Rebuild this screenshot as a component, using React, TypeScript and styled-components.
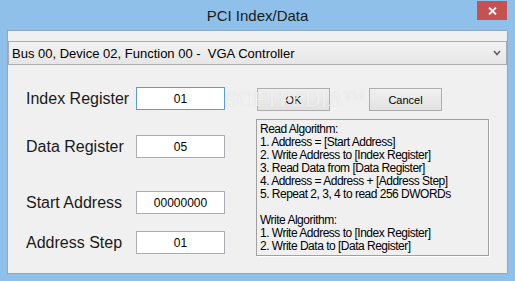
import styled, { createGlobalStyle } from "styled-components";

const GlobalStyle = createGlobalStyle`
  html, body {
    margin: 0;
    padding: 0;
    width: 515px;
    height: 281px;
    overflow: hidden;
  }
`;

const Window = styled.div`
  width: 515px;
  height: 281px;
  display: flex;
  flex-direction: column;
  background: #8fc0ea;
  box-sizing: border-box;
  font-family: "Liberation Sans", Arial, sans-serif;
`;

const TitleBar = styled.div`
  height: 30px;
  display: grid;
  grid-template-columns: 1fr auto 1fr;
  align-items: start;
`;

const Title = styled.div`
  grid-column: 2;
  margin-top: 7px;
  font-size: 15px;
  line-height: 18px;
  color: #1b1b1b;
`;

const CloseButton = styled.div`
  grid-column: 3;
  justify-self: end;
  margin: 1px 8px 0 0;
  width: 30px;
  height: 19px;
  background: #c75050;
  display: flex;
  align-items: center;
  justify-content: center;
`;

const Frame = styled.div`
  flex: 1;
  display: flex;
  padding: 0 7px 7px 7px;
`;

const Client = styled.div`
  position: relative;
  flex: 1;
  background: #f0f0f0;
  border: 1px solid #8ea9c4;
  display: flex;
  flex-direction: column;
`;

const Select = styled.div`
  margin-top: 10px;
  height: 24px;
  box-sizing: border-box;
  border: 1px solid #acacac;
  background: linear-gradient(#f2f2f2, #e6e6e6);
  display: flex;
  align-items: center;
  justify-content: space-between;
  padding: 0 5px 0 3px;
  font-size: 13px;
  color: #000;
  white-space: pre;
`;

const Main = styled.div`
  display: flex;
  gap: 31px;
`;

const LeftColumn = styled.div`
  margin-left: 18px;
  width: 199px;
  padding-top: 22px;
  display: flex;
  flex-direction: column;
`;

const Row = styled.div<{ $gap: number }>`
  display: flex;
  align-items: center;
  height: 23px;
  margin-top: ${(p) => p.$gap}px;
`;

const Label = styled.div`
  width: 110px;
  font-size: 16px;
  color: #1a1a1a;
`;

const Field = styled.input<{ $focused?: boolean }>`
  width: 89px;
  height: 23px;
  box-sizing: border-box;
  border: 1px solid ${(p) => (p.$focused ? "#569de5" : "#abadb3")};
  background: #fff;
  text-align: center;
  font-family: "Liberation Sans", Arial, sans-serif;
  font-size: 12px;
  color: #000;
  padding: 0;
  outline: none;
`;

const RightColumn = styled.div`
  width: 233px;
  padding-top: 23px;
  display: flex;
  flex-direction: column;
`;

const ButtonRow = styled.div`
  display: flex;
  gap: 39px;
  margin-left: 1px;
`;

const Button = styled.button`
  width: 73px;
  height: 23px;
  box-sizing: border-box;
  border: 1px solid #adadad;
  background: linear-gradient(#f0f0f0, #e3e3e3);
  font-family: "Liberation Sans", Arial, sans-serif;
  font-size: 11px;
  color: #000;
  padding: 0;
`;

const InfoBox = styled.div`
  margin-top: 8px;
  height: 137px;
  box-sizing: border-box;
  border: 1px solid #a0a0a0;
  box-shadow: 1px 1px 0 #ffffff;
  padding: 3px 3px;
  font-size: 12px;
  line-height: 13px;
  letter-spacing: -0.5px;
  color: #000;
`;

const InfoLine = styled.div`
  height: 13px;
  white-space: pre;
`;

const Watermark = styled.div`
  position: absolute;
  left: 217px;
  top: 57px;
  font-family: "Liberation Serif", serif;
  font-size: 22px;
  line-height: 22px;
  color: rgba(255, 255, 255, 0.7);
  text-shadow: 0 0 1px rgba(170, 170, 170, 0.45);
  pointer-events: none;
`;

const fields = [
  { label: "Index Register", value: "01", gap: 0, focused: true },
  { label: "Data Register", value: "05", gap: 25 },
  { label: "Start Address", value: "00000000", gap: 33 },
  { label: "Address Step", value: "01", gap: 17 },
];

const algorithm = [
  "Read Algorithm:",
  "1. Address = [Start Address]",
  "2. Write Address to [Index Register]",
  "3. Read Data from [Data Register]",
  "4. Address = Address + [Address Step]",
  "5. Repeat 2, 3, 4 to read 256 DWORDs",
  "",
  "Write Algorithm:",
  "1. Write Address to [Index Register]",
  "2. Write Data to [Data Register]",
];

const App = () => {
  return (
    <>
      <GlobalStyle />
      <Window>
        <TitleBar>
          <Title>PCI Index/Data</Title>
          <CloseButton>
            <svg width="9" height="8" viewBox="0 0 9 8">
              <path d="M1 0.5 L8 7.5 M8 0.5 L1 7.5" stroke="#fff" strokeWidth="1.8" />
            </svg>
          </CloseButton>
        </TitleBar>
        <Frame>
          <Client>
            <Select>
              <span>Bus 00, Device 02, Function 00 -  VGA Controller</span>
              <svg width="8" height="6" viewBox="0 0 8 6">
                <path d="M1 1 L4 4.5 L7 1" stroke="#606060" strokeWidth="1.6" fill="none" />
              </svg>
            </Select>
            <Main>
              <LeftColumn>
                {fields.map((f) => (
                  <Row key={f.label} $gap={f.gap}>
                    <Label>{f.label}</Label>
                    <Field $focused={f.focused} defaultValue={f.value} readOnly />
                  </Row>
                ))}
              </LeftColumn>
              <RightColumn>
                <ButtonRow>
                  <Button>OK</Button>
                  <Button>Cancel</Button>
                </ButtonRow>
                <InfoBox>
                  {algorithm.map((line, i) => (
                    <InfoLine key={i}>{line}</InfoLine>
                  ))}
                </InfoBox>
              </RightColumn>
            </Main>
            <Watermark>SOFTPEDIA™</Watermark>
          </Client>
        </Frame>
      </Window>
    </>
  );
};

export default App;
